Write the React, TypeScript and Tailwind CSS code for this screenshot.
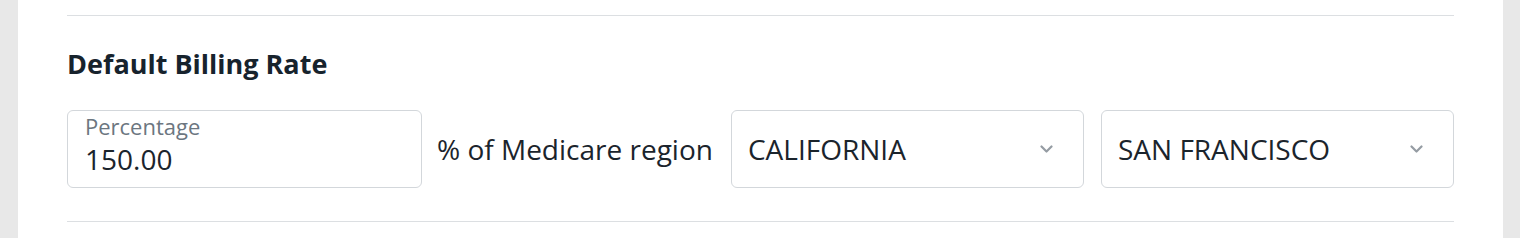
function Chevron() {
  return (
    <svg width="13" height="8" viewBox="0 0 13 8" fill="none" className="text-[#959ca3]">
      <path d="M1.5 1.5l5 5 5-5" stroke="currentColor" strokeWidth="2.2" strokeLinecap="round" strokeLinejoin="round" />
    </svg>
  )
}

function SelectBox({ value }: { value: string }) {
  return (
    <div className="flex-1 h-[78px] rounded-[6px] border border-[#d3d7db] bg-white flex items-center justify-between pl-[16px] pr-[30px]">
      <span className="text-[28px] leading-[38px] text-[#1b242c]">{value}</span>
      <Chevron />
    </div>
  )
}

export default function App() {
  return (
    <div className="w-[1520px] h-[238px] flex bg-[#e8e8e8] font-['Open_Sans',sans-serif] overflow-hidden">
      <div className="ml-[18px] w-[1485px] bg-white px-[49px]">
        <div className="border-t border-[#dcdfe2] mt-[15px]" />
        <h2 className="mt-[30px] text-[27px] leading-[36px] font-bold text-[#17232d]">Default Billing Rate</h2>
        <div className="mt-[28px] flex items-center">
          <div className="w-[355px] h-[78px] rounded-[6px] border border-[#d3d7db] px-[17px] flex flex-col">
            <span className="text-[22px] leading-[30px] text-[#6c7680]">Percentage</span>
            <span className="text-[28px] leading-[37px] text-[#1b242c]">150.00</span>
          </div>
          <span className="ml-[15px] mr-[18px] text-[28px] leading-[38px] text-[#1b242c] whitespace-nowrap">% of Medicare region</span>
          <div className="flex-1 flex gap-[17px]">
            <SelectBox value="CALIFORNIA" />
            <SelectBox value="SAN FRANCISCO" />
          </div>
        </div>
        <div className="border-t border-[#dcdfe2] mt-[33px]" />
      </div>
    </div>
  )
}
